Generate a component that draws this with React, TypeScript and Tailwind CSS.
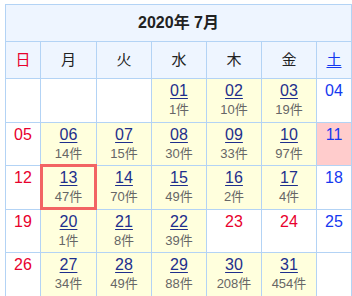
type Day = {
  d: string;
  count?: number;
  kind?: 'sun' | 'sat' | 'holiday';
  pink?: boolean;
  selected?: boolean;
};

const weeks: (Day | null)[][] = [
  [null, null, null, { d: '01', count: 1 }, { d: '02', count: 10 }, { d: '03', count: 19 }, { d: '04', kind: 'sat' }],
  [
    { d: '05', kind: 'sun' },
    { d: '06', count: 14 },
    { d: '07', count: 15 },
    { d: '08', count: 30 },
    { d: '09', count: 33 },
    { d: '10', count: 97 },
    { d: '11', kind: 'sat', pink: true },
  ],
  [
    { d: '12', kind: 'sun' },
    { d: '13', count: 47, selected: true },
    { d: '14', count: 70 },
    { d: '15', count: 49 },
    { d: '16', count: 2 },
    { d: '17', count: 4 },
    { d: '18', kind: 'sat' },
  ],
  [
    { d: '19', kind: 'sun' },
    { d: '20', count: 1 },
    { d: '21', count: 8 },
    { d: '22', count: 39 },
    { d: '23', kind: 'holiday' },
    { d: '24', kind: 'holiday' },
    { d: '25', kind: 'sat' },
  ],
  [
    { d: '26', kind: 'sun' },
    { d: '27', count: 34 },
    { d: '28', count: 49 },
    { d: '29', count: 88 },
    { d: '30', count: 208 },
    { d: '31', count: 454 },
    null,
  ],
];

const weekdays = ['日', '月', '火', '水', '木', '金', '土'];
const colWidths = ['w-[35px]', 'w-[56px]', 'w-[55px]', 'w-[55px]', 'w-[55px]', 'w-[55px]', 'w-[35px]'];

function DayCell({ day }: { day: Day | null }) {
  if (!day) {
    return <td className="border border-[#b3d3f5] bg-white" />;
  }

  const bg = day.pink ? 'bg-[#ffcccc]' : day.count !== undefined ? 'bg-[#ffffdd]' : 'bg-white';
  const color =
    day.kind === 'sat' ? 'text-[#1538f0]' : day.kind ? 'text-[#e8002d]' : 'text-[#1e2f8c] underline underline-offset-2';

  return (
    <td className={`relative border border-[#b3d3f5] ${bg} align-top text-center pt-[3px]`}>
      {day.selected && (
        <div className="absolute -left-[1px] -top-[2px] -right-[1px] -bottom-[1px] border-[3px] border-[#f26464]" />
      )}
      <div className={`text-[16px] leading-[18px] ${color}`}>{day.d}</div>
      {day.count !== undefined && (
        <div className="mt-[2px] text-[13px] leading-[15px] text-[#666666]">{day.count}件</div>
      )}
    </td>
  );
}

export default function App() {
  return (
    <div className="min-h-[296px] bg-white pl-[5px] pt-[4px] font-['Liberation_Sans','Noto_Sans_CJK_JP',sans-serif] text-[#222]">
      <table className="w-[346px] table-fixed border-collapse border border-[#b3d3f5]">
        <colgroup>
          {colWidths.map((w, i) => (
            <col key={i} className={w} />
          ))}
        </colgroup>
        <thead>
          <tr className="h-[37px]">
            <th colSpan={7} className="border border-[#b3d3f5] bg-[#eef5ff] text-[16px] font-bold text-[#222]">
              2020年 7月
            </th>
          </tr>
          <tr className="h-[37px]">
            {weekdays.map((w, i) => (
              <th
                key={w}
                className={`border border-[#b3d3f5] bg-[#eef5ff] text-[15px] font-normal ${
                  i === 0 ? 'text-[#e8002d]' : i === 6 ? 'text-[#1538f0] underline underline-offset-2' : 'text-[#222]'
                }`}
              >
                {w}
              </th>
            ))}
          </tr>
        </thead>
        <tbody>
          {weeks.map((week, wi) => (
            <tr key={wi} className="h-[43.5px]">
              {week.map((day, di) => (
                <DayCell key={di} day={day} />
              ))}
            </tr>
          ))}
        </tbody>
      </table>
    </div>
  );
}
